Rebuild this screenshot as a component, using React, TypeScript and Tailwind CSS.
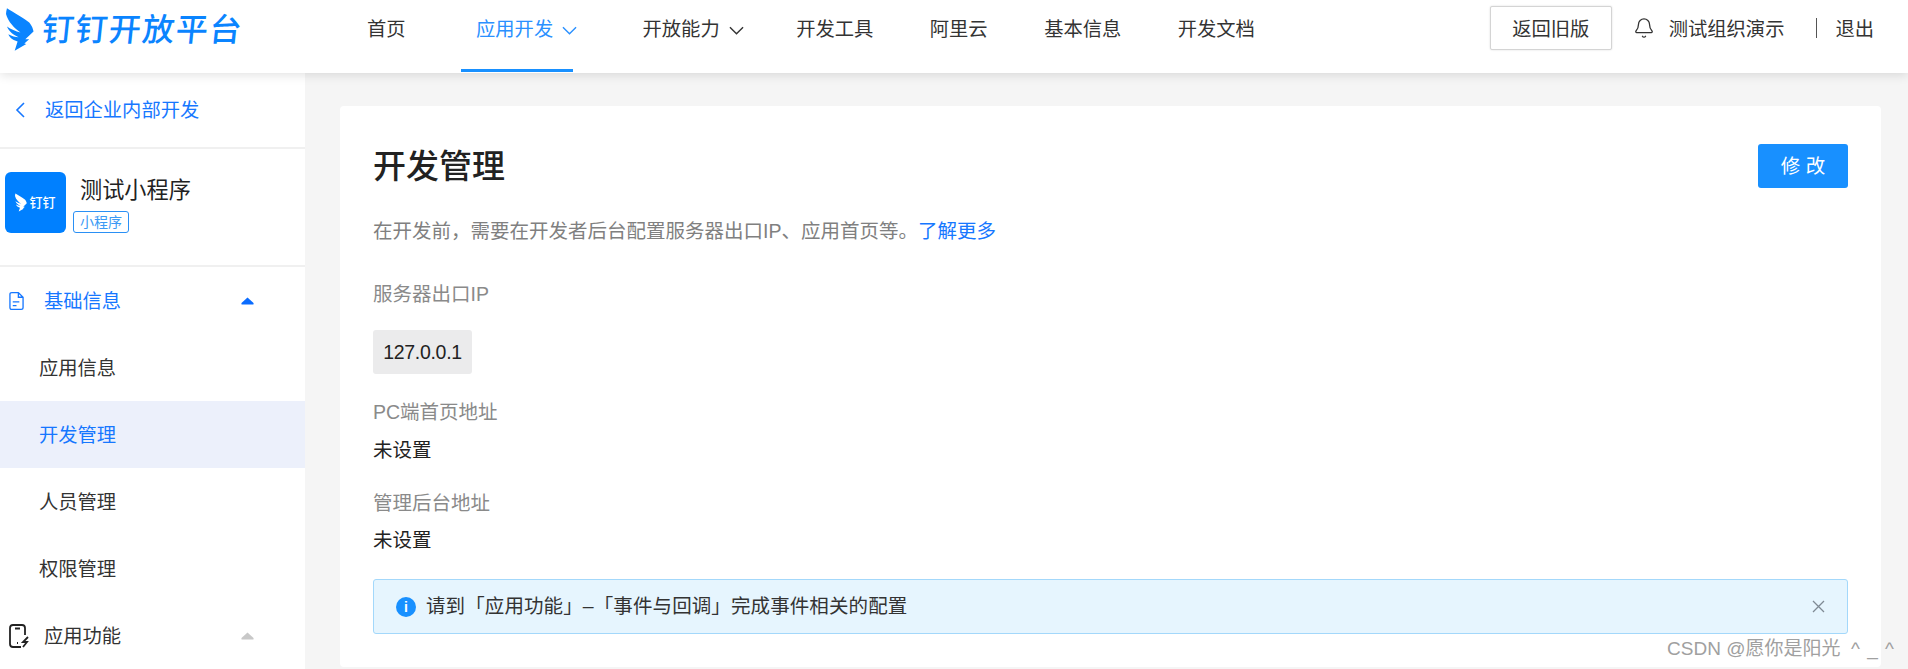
import { Bell } from "lucide-react"

const FONT = "font-['Liberation_Sans','Noto_Sans_CJK_SC',sans-serif]"

// Wing from the DingTalk logo
function Wing({ className }: { className: string }) {
  return (
    <svg viewBox="0 0 29 44" className={className} fill="currentColor">
      <path d="M1 0 C7 4 17 9 23 14 C26 16 28 21 28.500 24 L20 32 L24 32 L19 36.500 L21 37 L9 44 L12 34.500 L8 33 C5 31.500 3 29 2.500 27 C6 29 10 30 13 30 C8 28 3 24 1 19 C5 22 10 24 15 25 C9 21 2 14 0 6 C0 4 0.500 2 1 0 Z" />
    </svg>
  )
}

function Caret({ className }: { className: string }) {
  return (
    <svg viewBox="0 0 13 8" className={className} fill="currentColor">
      <path d="M6.500 0.500 L12.500 6 Q13 7.500 12 7.500 L1 7.500 Q0 7.500 0.500 6 Z" />
    </svg>
  )
}

function NavChevron({ className }: { className: string }) {
  return (
    <svg viewBox="0 0 16 9" className={className} fill="none" stroke="currentColor" strokeWidth="1.5">
      <path d="M1 1 L8 8 L15 1" />
    </svg>
  )
}

function Header() {
  return (
    <header className="relative z-10 flex h-[73px] shrink-0 bg-white shadow-[0_2px_10px_rgba(0,0,0,0.12)]">
      <div className="flex w-[367px] shrink-0 items-start pl-[6px] pt-[8px]">
        <Wing className="h-[43px] w-[28px] text-[#0a84ff]" />
        <span className="ml-[8px] mt-[3px] origin-left -skew-x-6 text-[32px] leading-[38px] font-medium tracking-[1.500px] whitespace-nowrap text-[#0a84ff]">
          钉钉开放平台
        </span>
      </div>
      <nav className="flex gap-[56.500px] text-[19.300px] leading-[28px] text-[#333]">
        <span className="pt-[16px] whitespace-nowrap">首页</span>
        <span className="-ml-[1px] flex h-[72px] w-[112px] items-start gap-[9px] border-b-[3px] border-[#1890ff] pl-[15px] pt-[16px] text-[#2a90ff]">
          <span className="whitespace-nowrap">应用开发</span>
          <NavChevron className="mt-[10px] h-[9px] w-[15px] shrink-0" />
        </span>
        <span className="ml-[13px] flex items-start gap-[9px] pt-[16px]">
          <span className="whitespace-nowrap">开放能力</span>
          <NavChevron className="mt-[10px] h-[9px] w-[15px] shrink-0" />
        </span>
        <span className="-ml-[4px] pt-[16px] whitespace-nowrap">开发工具</span>
        <span className="pt-[16px] whitespace-nowrap">阿里云</span>
        <span className="pt-[16px] whitespace-nowrap">基本信息</span>
        <span className="pt-[16px] whitespace-nowrap">开发文档</span>
      </nav>
      <div className="ml-auto flex items-start pr-[34px] text-[19.300px] leading-[28px] text-[#333]">
        <button className="mt-[6px] h-[44px] w-[122px] rounded-[2px] border border-[#d4d4d4] bg-white pt-[3px] shadow-[0_0_2px_rgba(0,0,0,0.15)]">返回旧版</button>
        <Bell className="ml-[21px] mt-[17px] size-[22px]" strokeWidth={1.4} />
        <span className="ml-[14px] mt-[16px] whitespace-nowrap">测试组织演示</span>
        <span className="ml-[32px] mt-[18px] h-[20px] w-px bg-[#555]" />
        <span className="ml-[18px] mt-[16px] whitespace-nowrap">退出</span>
      </div>
    </header>
  )
}

function Sidebar() {
  const subItems = ["应用信息", "开发管理", "人员管理", "权限管理"]
  return (
    <aside className="w-[305px] shrink-0 bg-white text-[19.300px]">
      <div className="flex h-[76px] items-center border-b-2 border-[#f0f0f0] pl-[15px] text-[#1677ff]">
        <svg viewBox="0 0 10 16" className="h-[16px] w-[10px]" fill="none" stroke="currentColor" strokeWidth="1.6">
          <path d="M9 1 L2 8 L9 15" />
        </svg>
        <span className="ml-[20px] mt-[3px] whitespace-nowrap">返回企业内部开发</span>
      </div>
      <div className="flex h-[118px] items-start border-b-2 border-[#f0f0f0] pl-[5px] pt-[23px]">
        <div className="flex h-[61px] w-[61px] items-center justify-center gap-[2px] rounded-[6px] bg-[#0080ff] text-white">
          <Wing className="h-[19px] w-[12px]" />
          <span className="text-[13px] font-medium">钉钉</span>
        </div>
        <div className="ml-[7px] flex flex-col">
          <span className="ml-[7px] mt-[2px] text-[22.200px] leading-[34px] text-[#222] whitespace-nowrap">测试小程序</span>
          <span className="mt-[3px] flex h-[22px] w-[56px] items-center justify-center rounded-[3px] border border-[#2a90f5] text-[14px] text-[#3b9af5]">小程序</span>
        </div>
      </div>
      <div className="flex h-[67px] items-center pl-[9px] pr-[51px] text-[#1677ff]">
        <svg viewBox="0 0 16 20" className="h-[20px] w-[15px]" fill="none" stroke="currentColor" strokeWidth="1.4">
          <path d="M3 1 H10 L15 6 V17 Q15 19 13 19 H3 Q1 19 1 17 V3 Q1 1 3 1 Z M10 1 V6 H15 M4 11 H11 M4 15 H8" />
        </svg>
        <span className="ml-[20px] mt-[4px] whitespace-nowrap">基础信息</span>
        <Caret className="ml-auto h-[8px] w-[13px] text-[#0a6cff]" />
      </div>
      {subItems.map((item) => (
        <div
          key={item}
          className={item === "开发管理" ? "flex h-[67px] items-center bg-[#ecf0fb] pl-[39px] text-[#1677ff]" : "flex h-[67px] items-center pl-[39px] text-[#333]"}
        >
          <span className="mt-[4px]">{item}</span>
        </div>
      ))}
      <div className="flex h-[67px] items-center pl-[9px] pr-[51px] text-[#333]">
        <svg viewBox="0 0 20 24" className="h-[24px] w-[20px]" fill="none" stroke="#222" strokeWidth="1.8">
          <path d="M12 23 H4 Q1 23 1 20 V4 Q1 1 4 1 H13 Q16 1 16 4 V11 M6 4.500 H11" />
          <path d="M19 13 L14 18 H18 L14 23 M8 19 H9" />
        </svg>
        <span className="ml-[15px] mt-[4px] whitespace-nowrap">应用功能</span>
        <Caret className="ml-auto h-[8px] w-[13px] text-[#c8c8c8]" />
      </div>
    </aside>
  )
}

function Content() {
  return (
    <main className="ml-[35px] mr-[27px] mt-[33px] h-[561px] flex-1 rounded-[4px] bg-white px-[33px] pt-[38px] text-[19.500px] leading-[28px]">
      <div className="flex h-[44px] items-center justify-between">
        <h1 className="mt-[2px] text-[33px] font-medium text-[#222]">开发管理</h1>
        <button className="h-[44px] w-[90px] rounded-[3px] bg-[#1890ff] text-white">修 改</button>
      </div>
      <p className="mt-[29px] text-[#808080]">
        在开发前，需要在开发者后台配置服务器出口IP、应用首页等。<span className="text-[#1677ff]">了解更多</span>
      </p>
      <div className="mt-[35px] h-[28px] text-[#8a8a8a]">服务器出口IP</div>
      <div className="mt-[22px] flex h-[44px] w-[99px] items-center justify-center rounded-[3px] bg-[#ebebec] tracking-[-0.300px] text-[#222]">127.0.0.1</div>
      <div className="mt-[24px] h-[28px] text-[#8a8a8a]">PC端首页地址</div>
      <div className="mt-[10px] h-[28px] text-[#222]">未设置</div>
      <div className="mt-[25px] h-[28px] text-[#8a8a8a]">管理后台地址</div>
      <div className="mt-[9px] h-[28px] text-[#222]">未设置</div>
      <div className="mt-[25px] flex h-[55px] items-center rounded-[3px] border border-[#a3d8fb] bg-[#e6f5fe] pl-[22px] pr-[22px] text-[#333]">
        <span className="flex size-[20px] items-center justify-center rounded-full bg-[#1890ff] text-[14px] font-bold text-white">i</span>
        <span className="mb-[2px] ml-[10px] tracking-[0.100px]">请到「应用功能」–「事件与回调」完成事件相关的配置</span>
        <svg viewBox="0 0 13 13" className="ml-auto size-[13px] text-[#7f8a94]" fill="none" stroke="currentColor" strokeWidth="1.3">
          <path d="M1 1 L12 12 M12 1 L1 12" />
        </svg>
      </div>
    </main>
  )
}

export default function App() {
  return (
    <div className={FONT + " relative flex h-[669px] flex-col overflow-hidden bg-[#f5f5f5]"}>
      <Header />
      <div className="flex flex-1">
        <Sidebar />
        <Content />
      </div>
      {/* CSDN watermark over the page */}
      <span className="absolute bottom-[6px] right-[13px] text-[19px] leading-[28px] whitespace-pre text-[#a0a0a0]">
        CSDN @愿你是阳光{"  "}<span className="tracking-[1px]">^ _ ^</span>
      </span>
    </div>
  )
}
